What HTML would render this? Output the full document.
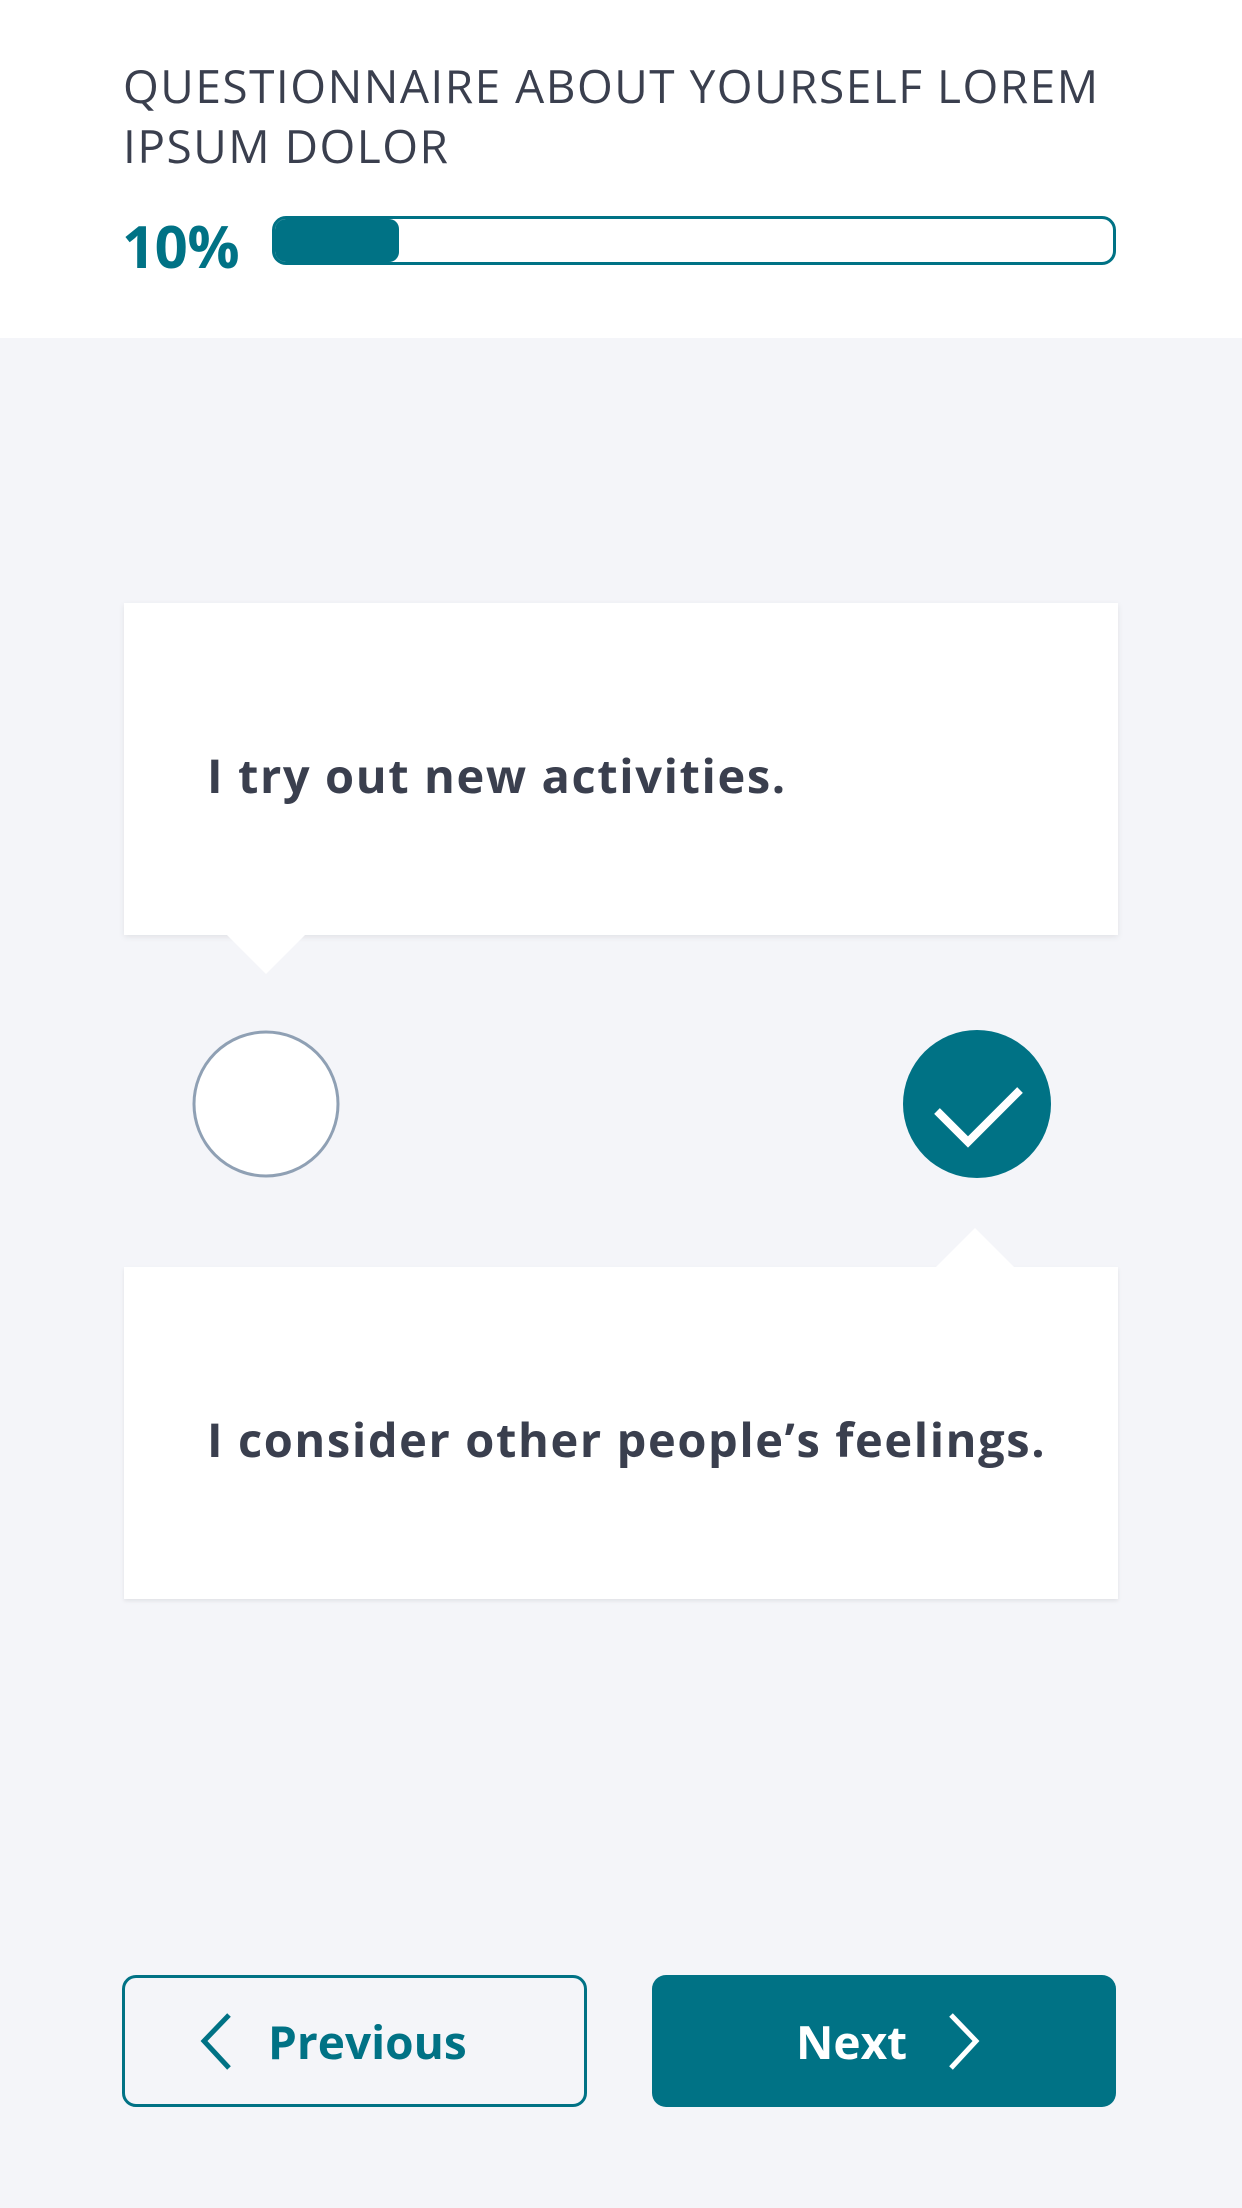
<!DOCTYPE html>
<html><head><meta charset="utf-8"><style>
*{margin:0;padding:0;box-sizing:border-box}
body{width:1242px;height:2208px;background:#f4f5f9;font-family:"Open Sans","Liberation Sans",sans-serif;position:relative;overflow:hidden;color:#3a3f4e}
.hdr{position:absolute;left:0;top:0;width:1242px;height:338px;background:#fff}
.title{position:absolute;left:123px;top:56px;font-size:46px;line-height:60px;letter-spacing:1.5px;color:#3a3f4e}
.pct{position:absolute;left:122px;top:206px;font-size:58px;font-weight:bold;color:#007285;letter-spacing:-0.5px}
.bar{position:absolute;left:272px;top:216px;width:844px;height:49px;border:3px solid #007285;border-radius:14px;overflow:hidden}
.fill{position:absolute;left:0;top:0;width:124px;height:100%;background:#007285;border-radius:10px}
.card{position:absolute;left:124px;width:994px;background:#fff;box-shadow:0 2px 6px rgba(0,0,0,.08)}
.card p{position:absolute;left:83px;font-size:47px;font-weight:bold;color:#3a3f4e;letter-spacing:1.6px;white-space:nowrap}
.btn{position:absolute;top:1975px;height:132px;border-radius:14px;font-size:46px;font-weight:bold}
</style></head><body>
<div class="hdr">
<div class="title">QUESTIONNAIRE ABOUT YOURSELF LOREM<br>IPSUM DOLOR</div>
<div class="pct">10%</div>
<div class="bar"><div class="fill"></div></div>
</div>
<div class="card" style="top:603px;height:332px"><p style="top:140px">I try out new activities.</p></div>
<div class="card" style="top:1267px;height:332px;box-shadow:0 2px 4px rgba(0,0,0,.08)"><p style="top:140px">I consider other people’s feelings.</p></div>
<div class="btn" style="left:122px;width:465px;border:3px solid #007285;color:#007285"><span style="position:absolute;left:143px;top:33px">Previous</span></div>
<div class="btn" style="left:652px;width:464px;background:#007285;color:#fff"><span style="position:absolute;left:144px;top:36px">Next</span></div>
<svg style="position:absolute;left:0;top:0" width="1242" height="2208">
<polygon points="226,934 306,934 266,974" fill="#fff"/>
<polygon points="935,1268 1015,1268 975,1228" fill="#fff"/>
<circle cx="266" cy="1104" r="72" fill="#fff" stroke="#8fa0b4" stroke-width="3"/>
<circle cx="977" cy="1104" r="74" fill="#007285"/>
<polyline points="937,1111 968,1142 1020,1090" fill="none" stroke="#fff" stroke-width="8"/>
<polyline points="229,2015 204,2041 229,2068" fill="none" stroke="#007285" stroke-width="5"/>
<polyline points="951,2015 976,2041 951,2068" fill="none" stroke="#fff" stroke-width="5"/>
</svg>
</body></html>
